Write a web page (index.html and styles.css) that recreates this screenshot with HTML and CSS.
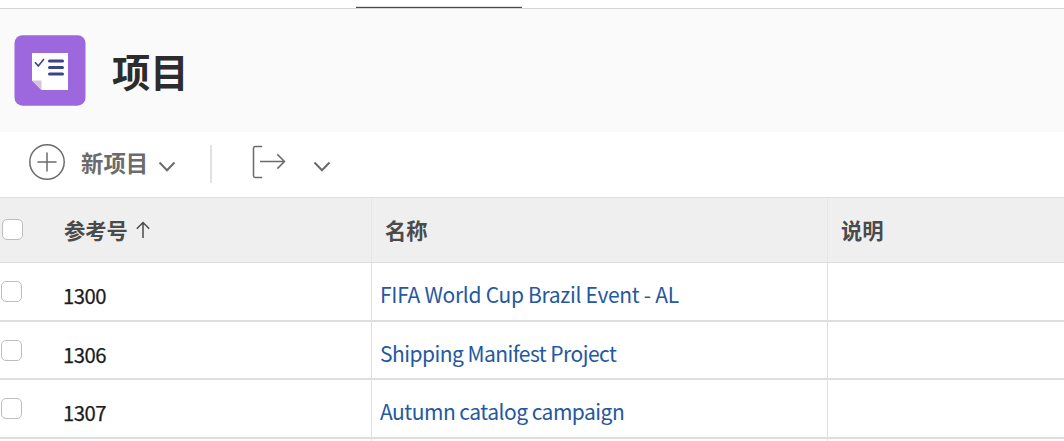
FILE: index.html
```html
<!DOCTYPE html>
<html lang="zh-CN">
<head>
<meta charset="utf-8">
<title>项目</title>
<link rel="stylesheet" href="styles.css">
</head>
<body>
<nav class="tabs"><span class="tab-active"></span></nav>
<header class="page-header">
  <svg class="logo" viewBox="0 0 72 71" width="72" height="71">
    <rect x=".5" y=".2" width="71" height="70.5" rx="8" fill="#9d68de"/>
    <path d="M18 18H54V55H27.5L18 45.5Z" fill="#fff"/>
    <path d="M18 45.5H27.5V55Z" fill="#d6c2e0"/>
    <path d="M21 27.2L24.3 31L30 24" fill="none" stroke="#3b4389" stroke-width="1.6"/>
    <path d="M35.5 26H48.5M35.5 32.5H48.5M35.5 39H48.5" stroke="#3b4389" stroke-width="3" stroke-linecap="round"/>
  </svg>
  <h1 class="title">项目</h1>
</header>
<div class="toolbar">
  <svg class="icon-add" viewBox="0 0 36 36" width="36" height="36"><circle cx="18" cy="18" r="17.2"/><path d="M8.5 18H27.5M18 8.5V27.5"/></svg>
  <span class="new-label">新项目</span>
  <svg class="chevron" viewBox="0 0 18 12" width="18" height="12"><path d="M1.5 1.5L9 9.2L16.5 1.5"/></svg>
  <span class="divider"></span>
  <svg class="icon-export" viewBox="0 0 34 34" width="34" height="34"><path d="M10.2 1.5H3.2Q1.5 1.5 1.5 3.2V30.8Q1.5 32.5 3.2 32.5H10.2M8 16.5H32.5M25.3 9.4L32.5 16.5L25.3 23.6"/></svg>
  <svg class="chevron chevron-export" viewBox="0 0 18 12" width="18" height="12"><path d="M1.5 1.5L9 9.2L16.5 1.5"/></svg>
</div>
<main class="grid">
  <div class="row head">
    <div class="cell ref"><span class="check"></span><span class="label">参考号</span><svg class="sort" viewBox="0 0 14 18" width="14" height="18"><path d="M7 17V1.5M.8 7.7L7 1.5L13.2 7.7"/></svg></div>
    <div class="cell name"><span class="label">名称</span></div>
    <div class="cell desc"><span class="label">说明</span></div>
  </div>
  <div class="row">
    <div class="cell ref"><span class="check"></span><span class="number">1300</span></div>
    <div class="cell name"><a class="link link-fifa">FIFA World Cup Brazil Event - AL</a></div>
    <div class="cell desc"></div>
  </div>
  <div class="row">
    <div class="cell ref"><span class="check"></span><span class="number">1306</span></div>
    <div class="cell name"><a class="link link-shipping">Shipping Manifest Project</a></div>
    <div class="cell desc"></div>
  </div>
  <div class="row">
    <div class="cell ref"><span class="check"></span><span class="number">1307</span></div>
    <div class="cell name"><a class="link link-autumn">Autumn catalog campaign</a></div>
    <div class="cell desc"></div>
  </div>
  <div class="row row-end">
    <div class="cell ref"></div>
    <div class="cell name"></div>
    <div class="cell desc"></div>
  </div>
</main>
</body>
</html>
```
FILE: styles.css
```css
* { box-sizing: border-box; }
body {
  margin: 0;
  width: 1064px;
  height: 441px;
  overflow: hidden;
  background: #fff;
  font-family: "Noto Sans CJK SC", "Noto Sans", sans-serif;
}
svg { display: block; flex: none; }
.tabs { height: 9px; border-bottom: 1px solid #d5d5d5; padding: 6px 0 0 356px; }
.tab-active { display: block; width: 166px; height: 2px; border-top: 1px solid #dedede; background: #4b4b4b; }
.page-header { display: flex; height: 123px; padding: 26px 0 0 14px; background: #fafafa; }
.title { margin: 8px 0 0 26px; font-size: 38.3px; line-height: 56px; font-weight: 700; color: #2c2c2c; }
.toolbar { display: flex; height: 65px; padding-left: 29px; }
.toolbar svg { fill: none; stroke: #6b6b6b; stroke-width: 1.5; }
.icon-add { margin-top: 12px; }
.new-label { margin: 14px 0 0 16px; width: 68px; font-size: 22.4px; line-height: 33px; font-weight: 700; color: #6b6b6b; white-space: nowrap; }
.toolbar .chevron { margin: 29px 0 0 9px; stroke-width: 2; }
.divider { width: 1.5px; height: 38px; margin: 13px 0 0 34px; background: #e1e1e1; }
.icon-export { margin: 13px 0 0 40.5px; }
.toolbar .chevron-export { margin-left: 26.5px; }
.row { display: grid; grid-template-columns: 371px 456px 1fr; height: 58.5px; }
.cell { display: flex; border-bottom: 2px solid #dedede; }
.name, .desc { border-left: 1px solid #e0e0e0; }
.name { padding-left: 8px; }
.head { height: 66px; background: #efefef; border-top: 1px solid #dfdfdf; border-bottom: 1px solid #dedede; }
.head .cell { border-bottom: 0; border-left-color: #e6e6e6; }
.head .name { padding-left: 13px; }
.head .desc { padding-left: 13px; }
.row-end { height: 2.5px; }
.row-end .cell { border-bottom: 0; }
.check { width: 21px; height: 21px; margin: 18px 0 0 1px; border: 1px solid #bdbdbd; border-radius: 5px; background: #fff; }
.head .check { margin: 21px 0 0 2px; }
.label { margin-top: 16px; font-size: 21.3px; line-height: 32px; font-weight: 700; color: #4b4b4b; }
.ref .label { margin-left: 41px; }
.sort { margin: 23px 0 0 8px; fill: none; stroke: #4b4b4b; stroke-width: 1.5; }
.number { margin: 16px 0 0 41px; font-size: 20.3px; line-height: 32px; color: #1c1c1c; letter-spacing: -.5px; -webkit-text-stroke: .25px #1c1c1c; }
.link { margin-top: 15px; font-size: 21px; line-height: 32px; color: #2458a0; white-space: nowrap; }
.link-fifa { letter-spacing: -.3px; }
.link-shipping { letter-spacing: -.53px; }
.link-autumn { letter-spacing: -.52px; }
```
